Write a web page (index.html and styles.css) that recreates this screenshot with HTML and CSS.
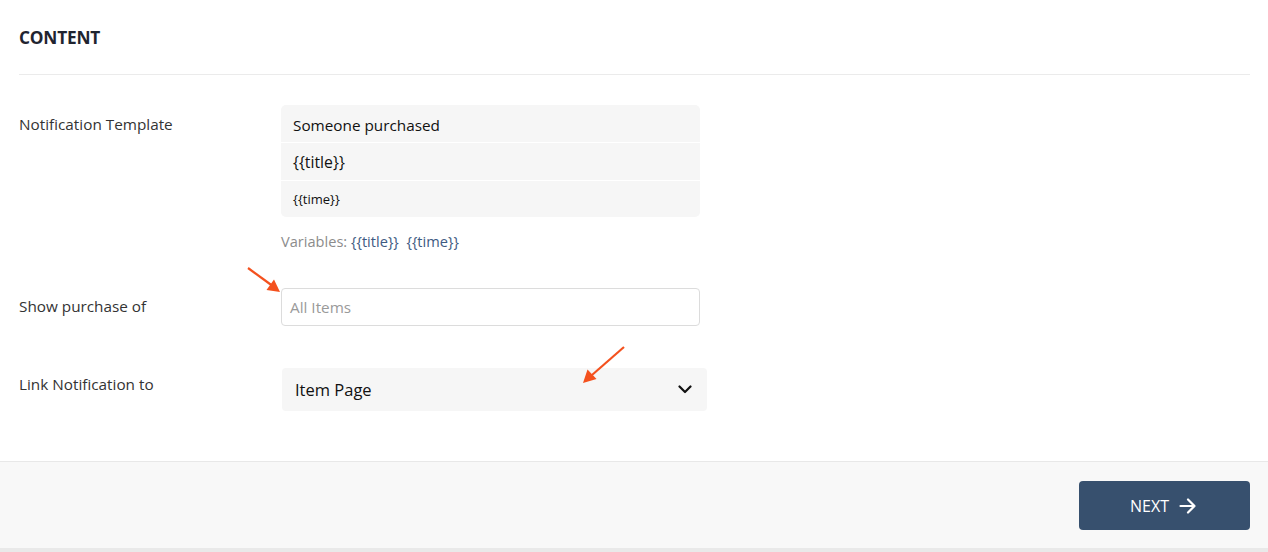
FILE: index.html
```html
<!DOCTYPE html>
<html>
<head>
<meta charset="utf-8">
<link rel="stylesheet" href="styles.css">
</head>
<body>
<div class="page">
  <div class="card">
    <div class="card-head">
      <h2 class="title">CONTENT</h2>
    </div>
    <div class="form">
      <div class="row row-template">
        <label class="label">Notification Template</label>
        <div class="control">
          <div class="tpl">
            <div class="tpl-line tpl-1">Someone purchased</div>
            <div class="tpl-line tpl-2">{{title}}</div>
            <div class="tpl-line tpl-3">{{time}}</div>
          </div>
          <div class="vars">Variables: <span class="var">{{title}}</span>&nbsp; <span class="var">{{time}}</span></div>
        </div>
      </div>
      <div class="row row-purchase">
        <label class="label">Show purchase of</label>
        <div class="control">
          <div class="input"><span class="placeholder">All Items</span></div>
        </div>
      </div>
      <div class="row row-link">
        <label class="label">Link Notification to</label>
        <div class="control">
          <div class="select">
            <span>Item Page</span>
            <svg class="chev" width="14" height="9" viewBox="0 0 14 9"><path d="M1.5 1.5 L7 7 L12.5 1.5" fill="none" stroke="#111" stroke-width="2.2" stroke-linecap="round" stroke-linejoin="round"/></svg>
          </div>
        </div>
      </div>
    </div>
    <svg class="arrow arrow-1" width="40" height="32" viewBox="0 0 40 32"><line x1="2" y1="2" x2="26" y2="19.5" stroke="#f4511e" stroke-width="2.2"/><polygon points="34,26 20.5,24 28,13.5" fill="#f4511e"/></svg>
    <svg class="arrow arrow-2" width="48" height="42" viewBox="0 0 48 42"><line x1="46" y1="2" x2="14" y2="30" stroke="#f4511e" stroke-width="2.2"/><polygon points="5,38 9.5,24.5 18.5,34" fill="#f4511e"/></svg>
  </div>
  <div class="footer">
    <button class="next">NEXT
      <svg width="18" height="16" viewBox="0 0 18 16"><path d="M1.5 8 H15.5 M9 1.5 L15.5 8 L9 14.5" fill="none" stroke="#fff" stroke-width="2.2" stroke-linecap="round" stroke-linejoin="round"/></svg>
    </button>
  </div>
</div>
</body>
</html>
```

FILE: styles.css
```css
* { box-sizing: border-box; }
html, body { margin: 0; padding: 0; background: #fff; }
body {
  font-family: "Open Sans", "Noto Sans", sans-serif;
  color: #222;
}
.page {
  width: 1268px;
  height: 552px;
  display: flex;
  flex-direction: column;
}
.card {
  position: relative;
  height: 461px;
  padding: 0 18px 0 19px;
}
.card-head {
  height: 75px;
  border-bottom: 1px solid #ebebeb;
  display: flex;
  align-items: flex-start;
  padding-top: 25px;
}
.title {
  margin: 0;
  font-size: 17.3px;
  font-weight: 700;
  color: #1f2430;
  line-height: 26px;
  letter-spacing: -0.2px;
}
.form {
  padding-top: 30px;
  display: flex;
  flex-direction: column;
}
.row {
  display: grid;
  grid-template-columns: 262px 1fr;
}
.label {
  font-size: 15.3px;
  color: #333;
  line-height: 20px;
}
.row-template .label { padding-top: 9px; }
.tpl {
  width: 419px;
  display: flex;
  flex-direction: column;
  gap: 1px;
}
.tpl-line {
  background: #f6f6f6;
  padding: 0 12px;
  display: flex;
  align-items: center;
  color: #111;
}
.tpl-1 { height: 37px; font-size: 15.3px; border-radius: 5px 5px 0 0; padding-top: 2px; }
.tpl-2 { height: 37px; font-size: 15.8px; }
.tpl-3 { height: 36px; font-size: 13px; border-radius: 0 0 5px 5px; }
.vars {
  margin-top: 14px;
  font-size: 14.6px;
  line-height: 20px;
  color: #8c8c8c;
}
.var { color: #3e5a82; }
.row-purchase { margin-top: 37px; }
.row-purchase .label { padding-top: 8px; }
.input {
  width: 419px;
  height: 38px;
  border: 1px solid #dcdcdc;
  border-radius: 4px;
  display: flex;
  align-items: center;
  padding: 0 8px;
}
.placeholder { font-size: 15.3px; color: #9a9a9a; }
.row-link { margin-top: 42px; }
.row-link .label { padding-top: 6px; }
.row-link .control { padding-left: 1px; }
.select {
  width: 425px;
  height: 43px;
  background: #f6f6f6;
  border-radius: 4px;
  display: flex;
  align-items: center;
  justify-content: space-between;
  padding: 0 15px 0 13px;
  font-size: 16.5px;
  color: #111;
}
.arrow { position: absolute; }
.arrow-1 { left: 246px; top: 266px; }
.arrow-2 { left: 578px; top: 345px; }
.footer {
  flex: 1;
  background: #f8f8f8;
  border-top: 1px solid #e8e8e8;
  border-bottom: 4px solid #e9e9e9;
  display: flex;
  justify-content: flex-end;
  align-items: flex-start;
  padding: 19px 18px 0 0;
}
.next {
  width: 171px;
  height: 49px;
  border: 0;
  border-radius: 4px;
  background: #37506e;
  color: #fff;
  font-family: "Open Sans", "Noto Sans", sans-serif;
  font-size: 16px;
  display: flex;
  align-items: center;
  justify-content: center;
  gap: 10px;
  padding: 0 2px 0 0;
}
```
